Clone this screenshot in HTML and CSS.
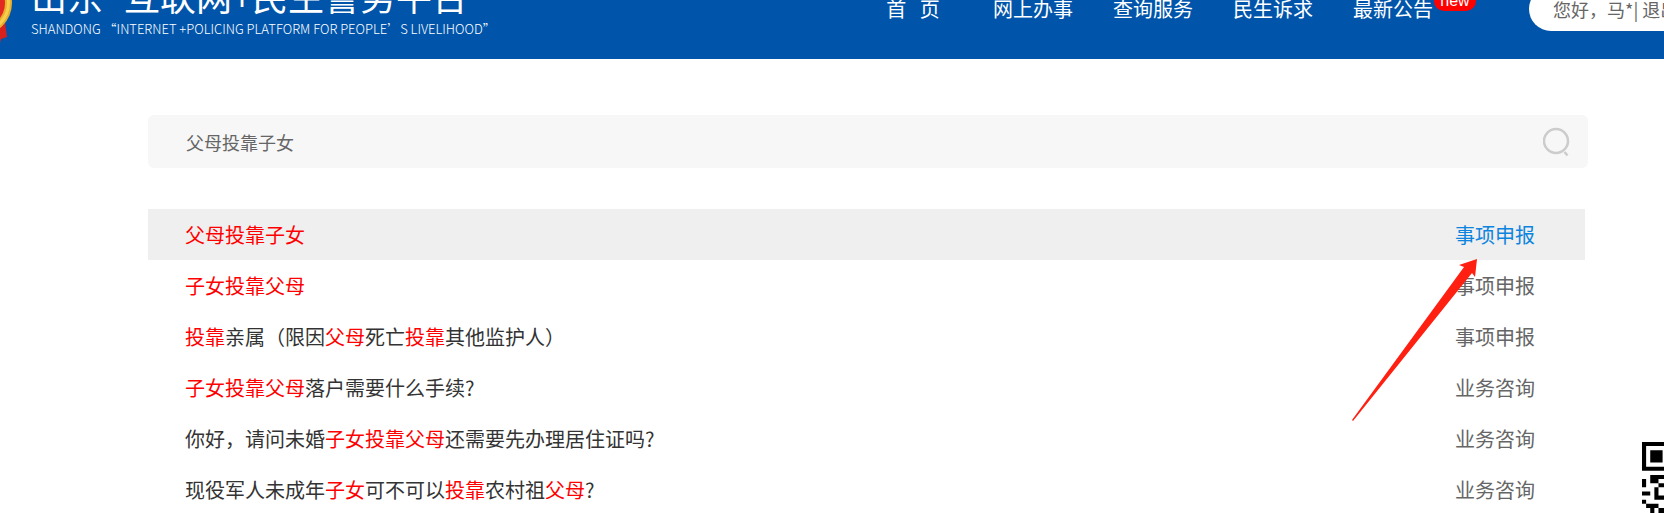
FILE: index.html
```html
<!DOCTYPE html>
<html lang="zh-CN">
<head>
    <meta charset="UTF-8">
    <meta name="viewport" content="width=device-width, initial-scale=1.0">
    <title>山东“互联网+民生警务平台”</title>
    <link rel="stylesheet" href="styles.css">
</head>
<body>
    <header class="header">
        <div class="brand">
            <svg class="emblem" width="66" height="80" viewBox="0 0 66 80">
                <path d="M14 50 L57 46 L60 68 L54 70 L53 74 L46 70 L33 64 L10 70 Z" fill="#d8201c"/>
                <circle cx="33" cy="34" r="32" fill="#e8b02c"/>
                <circle cx="33" cy="34" r="30" fill="#f7cf4d"/>
                <circle cx="33" cy="34" r="27" fill="#e8b02c"/>
                <circle cx="33" cy="34" r="25" fill="#e32a22"/>
            </svg>
            <div class="brand-text">
                <div class="brand-title">山东 <span class="quote">“</span>互联网+民生警务平台”</div>
                <div class="brand-sub">SHANDONG “INTERNET +POLICING PLATFORM FOR PEOPLE’S LIVELIHOOD”</div>
            </div>
        </div>
        <nav class="nav">
            <a href="#">首&nbsp;&nbsp; 页</a>
            <a href="#">网上办事</a>
            <a href="#">查询服务</a>
            <a href="#">民生诉求</a>
            <a href="#">最新公告<span class="badge">new</span></a>
        </nav>
        <div class="user">您好，马*| <a href="#">退出</a></div>
    </header>

    <main class="content">
        <form class="search">
            <input type="text" aria-label="搜索" value="父母投靠子女">
            <button type="button" aria-label="搜索">
                <svg width="28" height="30" viewBox="0 0 28 30" fill="none" stroke="#ccc" stroke-width="2.5">
                    <circle cx="13" cy="14" r="12"/>
                    <path d="M21.5 25 L24.5 28.5"/>
                </svg>
            </button>
        </form>

        <div class="results">
            <ul>
                <li class="active"><a href="#"><em>父母投靠子女</em></a><span>事项申报</span></li>
                <li><a href="#"><em>子女投靠父母</em></a><span>事项申报</span></li>
                <li><a href="#"><em>投靠</em>亲属（限因<em>父母</em>死亡<em>投靠</em>其他监护人）</a><span>事项申报</span></li>
                <li><a href="#"><em>子女投靠父母</em>落户需要什么手续?</a><span>业务咨询</span></li>
                <li><a href="#">你好，请问未婚<em>子女投靠父母</em>还需要先办理居住证吗?</a><span>业务咨询</span></li>
                <li><a href="#">现役军人未成年<em>子女</em>可不可以<em>投靠</em>农村祖<em>父母</em>?</a><span>业务咨询</span></li>
            </ul>
            <svg class="arrow" width="126" height="164" viewBox="0 0 126 164">
                <path d="M125 1 L107 7 L112 9 L0 162 L1 163 L120 15 L123 19 Z" fill="#ff2012"/>
            </svg>
        </div>
    </main>

    <svg class="qrcode" width="103" height="103" viewBox="0 0 25 25">
        <path d="M0 0h7v7h-7z M1 1v5h5v-5z M2 2h3v3h-3z M2 8h4v1h-2v1h2v1h-2v2h2v1h-3v-3h1v-1h-2z M0 9h1v2h-1z M0 12h2v1h-2z M0 14h1v1h-1z M1 15h3v1h-1v2h-1v-2h-1z M4 16h2v2h-2z" fill-rule="evenodd"/>
    </svg>
</body>
</html>
```

FILE: styles.css
```css
body {
    margin: 0;
    font-family: "Noto Sans CJK SC", sans-serif;
    font-size: 20px;
    color: #333;
    background-color: #fff;
    overflow: hidden;
    position: relative;
}
a {
    color: inherit;
    text-decoration: none;
}
.header {
    display: flex;
    align-items: center;
    height: 100px;
    margin-top: -41px;
    background-color: #0055aa;
    color: #fff;
    overflow: hidden;
}
.brand {
    display: flex;
    align-items: center;
    gap: 18px;
    margin-left: -53px;
    white-space: nowrap;
}
.brand-text {
    padding-bottom: 7px;
}
.brand-title {
    font-size: 36px;
    line-height: 44px;
}
.quote {
    font-family: "Noto Sans", sans-serif;
}
.brand-sub {
    font-size: 13px;
    font-weight: 300;
    line-height: 18px;
}
.nav {
    display: flex;
    margin-left: auto;
}
.nav a {
    position: relative;
    width: 120px;
    line-height: 30px;
    text-align: center;
    white-space: nowrap;
}
.badge {
    position: absolute;
    top: -3px;
    left: 101px;
    width: 42px;
    border-radius: 10px;
    background-color: #f00;
    font-family: "Liberation Sans", sans-serif;
    font-size: 16px;
    line-height: 20px;
}
.user {
    box-sizing: border-box;
    width: 180px;
    height: 44px;
    margin-left: 76px;
    margin-right: -45px;
    padding-left: 24px;
    border-radius: 22px;
    background-color: #fff;
    color: #666;
    font-size: 18px;
    line-height: 44px;
    white-space: nowrap;
}
.content {
    padding: 56px 76px 0 148px;
}
.search {
    display: flex;
    align-items: center;
    height: 53px;
    padding: 0 17px 0 38px;
    border-radius: 6px;
    background-color: #f7f7f7;
}
.search input {
    flex: 1;
    padding: 0;
    border: none;
    outline: none;
    background: none;
    font: inherit;
    font-size: 18px;
    color: #666;
}
.search button {
    padding: 0;
    border: none;
    background: none;
    cursor: pointer;
}
.search svg {
    display: block;
}
.results {
    position: relative;
    margin: 41px 3px 0 0;
}
.results ul {
    margin: 0;
    padding: 0;
    list-style: none;
}
.results li {
    display: flex;
    justify-content: space-between;
    padding: 0 50px 0 37px;
    line-height: 51px;
}
.results em {
    font-style: normal;
    color: #f00;
}
.results span {
    color: #666;
}
.results .active {
    background-color: #efefef;
}
.results .active span {
    color: #0d84dd;
}
.arrow {
    position: absolute;
    top: 49px;
    right: 107px;
}
.qrcode {
    position: absolute;
    top: 442px;
    right: -81px;
}
```
